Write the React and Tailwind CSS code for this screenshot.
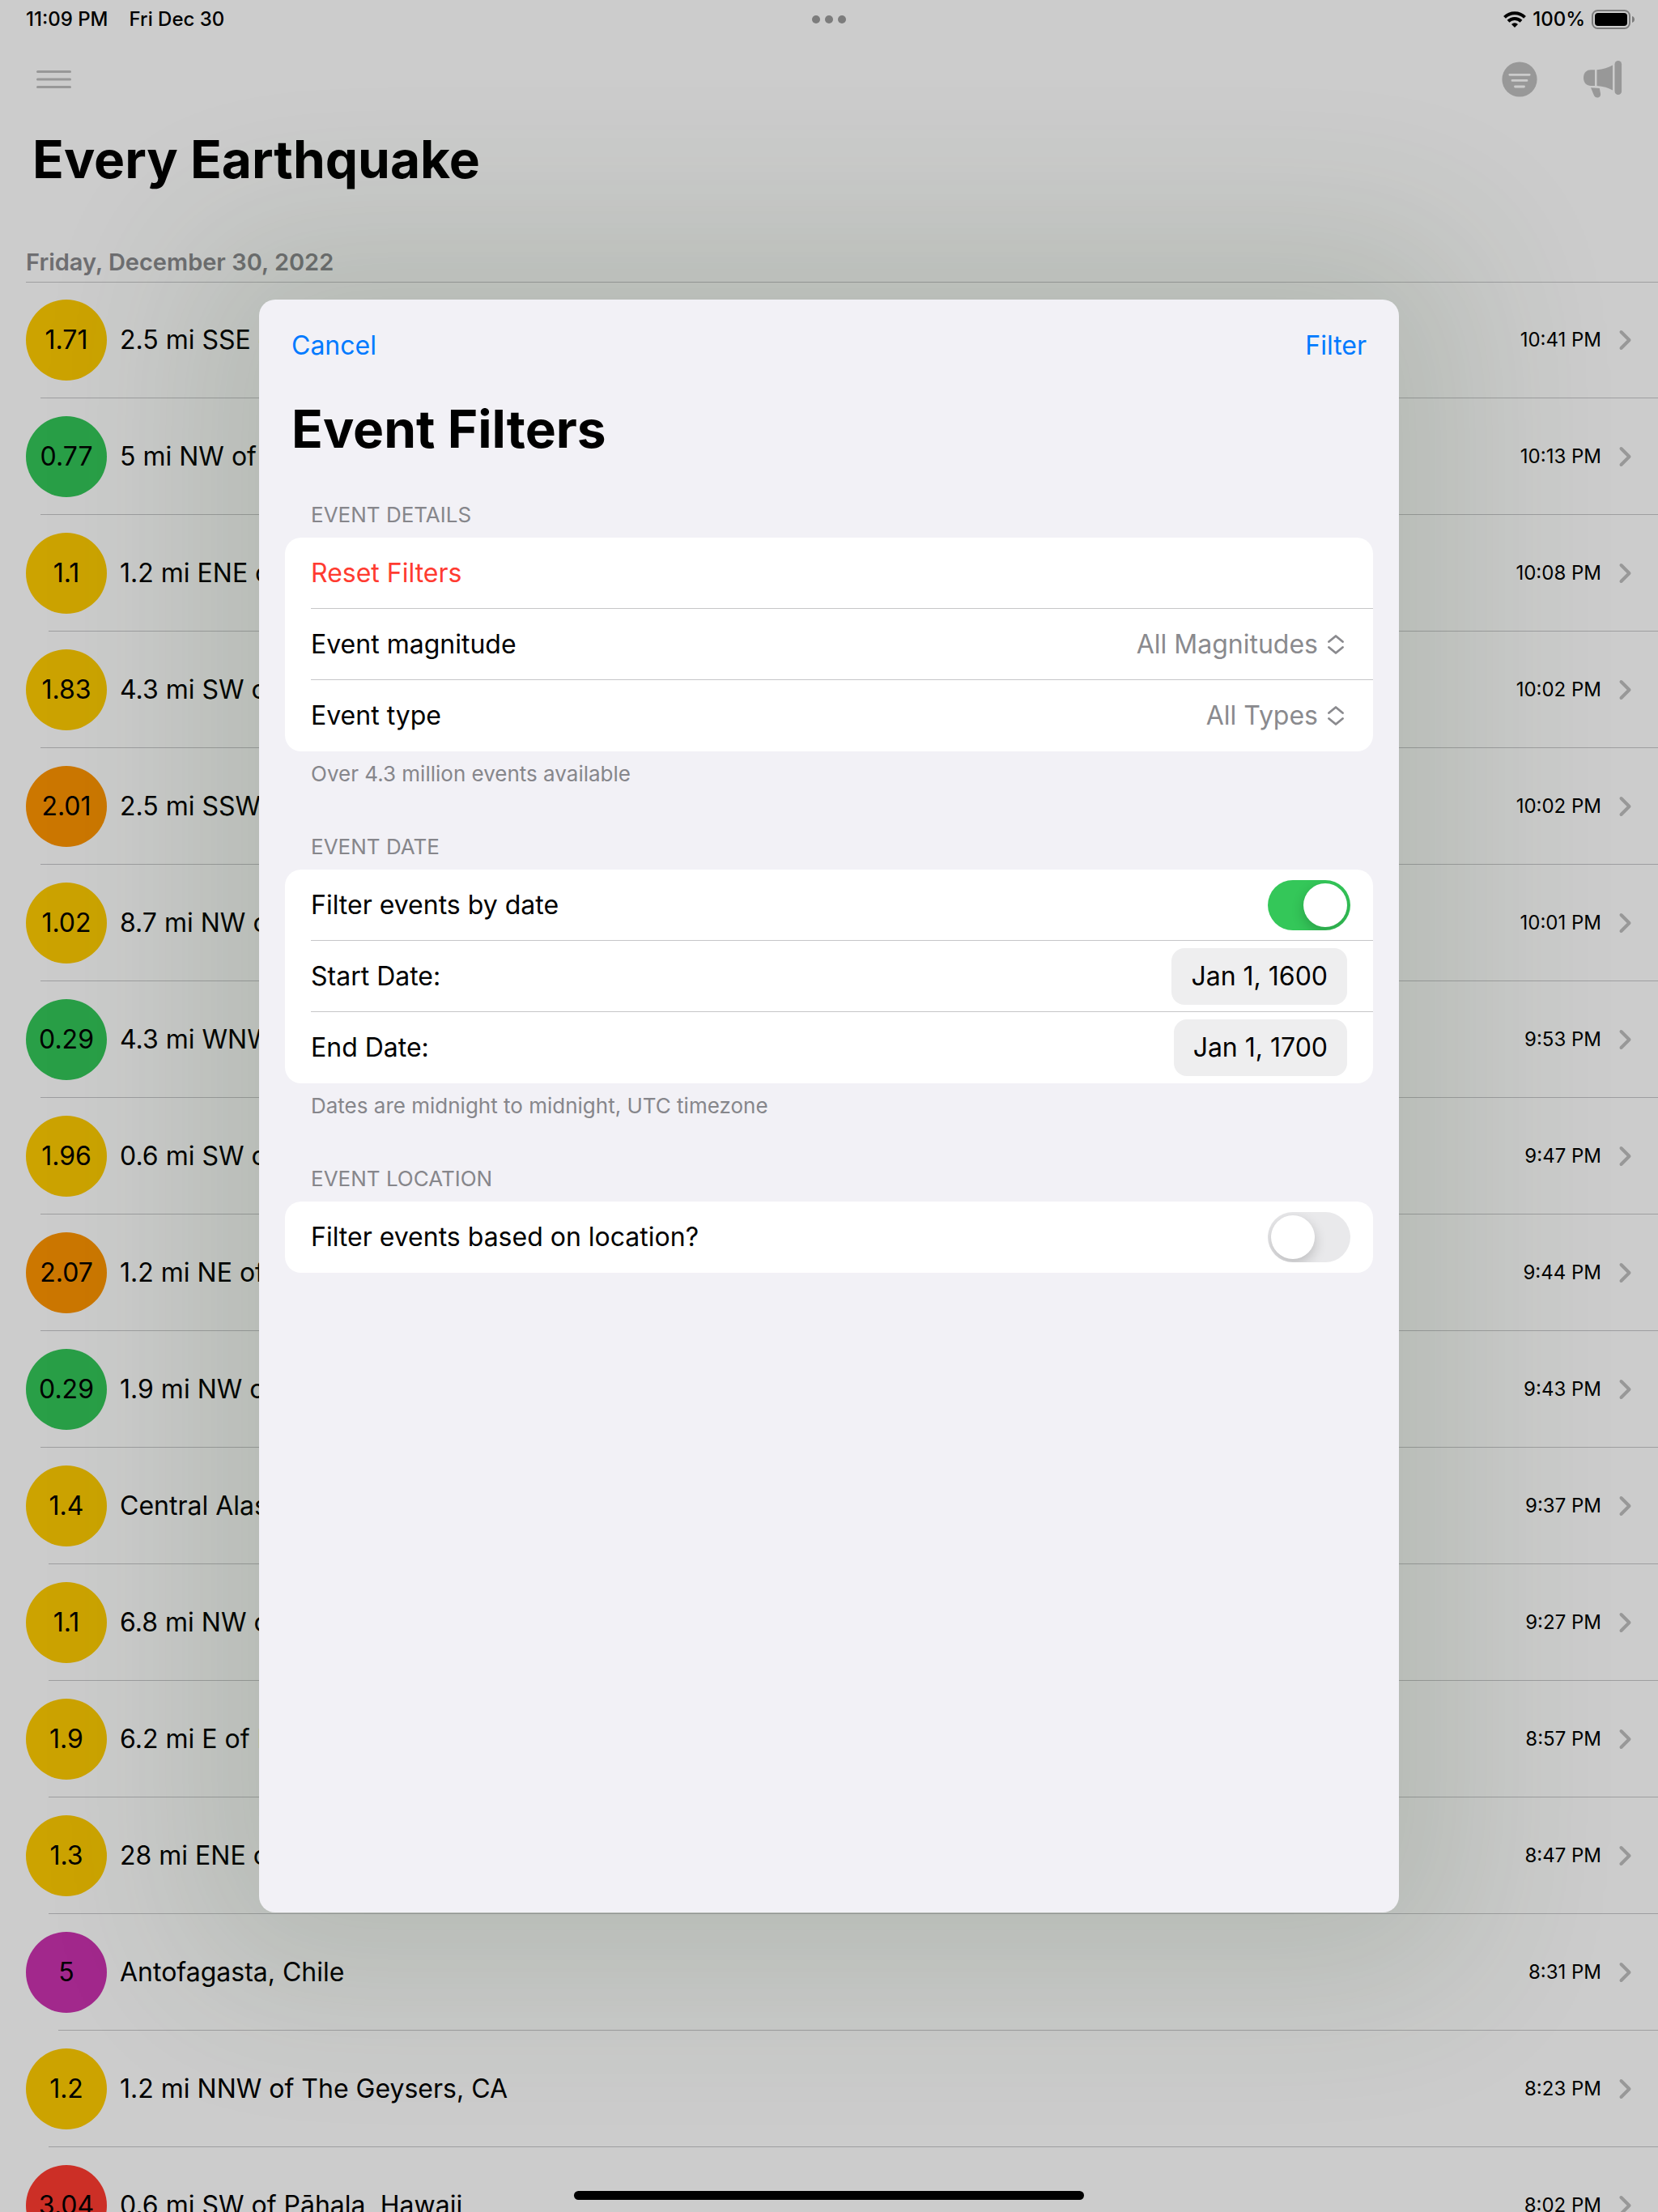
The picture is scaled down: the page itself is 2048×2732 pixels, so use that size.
const QUAKES = [
  ["1.71", "2.5 mi SSE of Mammoth Lakes, CA", "10:41 PM", "yellow"],
  ["0.77", "5 mi NW of The Geysers, CA", "10:13 PM", "green"],
  ["1.1", "1.2 mi ENE of Pleasant Hill, CA", "10:08 PM", "yellow"],
  ["1.83", "4.3 mi SW of Volcano, Hawaii", "10:02 PM", "yellow"],
  ["2.01", "2.5 mi SSW of Pāhala, Hawaii", "10:02 PM", "orange"],
  ["1.02", "8.7 mi NW of Ludlow, CA", "10:01 PM", "yellow"],
  ["0.29", "4.3 mi WNW of Cobb, CA", "9:53 PM", "green"],
  ["1.96", "0.6 mi SW of Pāhala, Hawaii", "9:47 PM", "yellow"],
  ["2.07", "1.2 mi NE of Pāhala, Hawaii", "9:44 PM", "orange"],
  ["0.29", "1.9 mi NW of The Geysers, CA", "9:43 PM", "green"],
  ["1.4", "Central Alaska", "9:37 PM", "yellow"],
  ["1.1", "6.8 mi NW of The Geysers, CA", "9:27 PM", "yellow"],
  ["1.9", "6.2 mi E of Pāhala, Hawaii", "8:57 PM", "yellow"],
  ["1.3", "28 mi ENE of Pedro Bay, Alaska", "8:47 PM", "yellow"],
  ["5", "Antofagasta, Chile", "8:31 PM", "magenta"],
  ["1.2", "1.2 mi NNW of The Geysers, CA", "8:23 PM", "yellow"],
  ["3.04", "0.6 mi SW of Pāhala, Hawaii", "8:02 PM", "red"],
];

const BADGE = {
  yellow: "bg-[#ffcc00]",
  green: "bg-[#34c759]",
  orange: "bg-[#ff9500]",
  red: "bg-[#ff3b30]",
  magenta: "bg-[#cb32af]",
};

// Each divider starts where the magnitude text of its row starts.
const DIVIDER = {
  1: "ml-[72px]",
  3: "ml-[60px]",
  4: "ml-[50px]",
};

function StatusBar() {
  return (
    <div className="relative flex h-12 items-center justify-between pl-8 pr-7 text-2xl font-medium">
      <div className="flex gap-[26px]">
        <span>11:09 PM</span>
        <span>Fri Dec 30</span>
      </div>
      <svg className="absolute inset-x-0 mx-auto" width="44" height="12" viewBox="0 0 44 12" fill="#9c9c9c">
        <circle cx="6" cy="6" r="5" />
        <circle cx="22" cy="6" r="5" />
        <circle cx="38" cy="6" r="5" />
      </svg>
      <div className="flex items-center gap-2">
        <svg width="28" height="20" viewBox="0 0 28 20" fill="none" stroke="#000" strokeWidth="4">
          <path d="M1.500 7.400a17.700 17.700 0 0 1 25 0" />
          <path d="M6 12.300a11.500 11.500 0 0 1 16 0" />
          <path d="M14 20l-4-4.100a5.800 5.800 0 0 1 8 0z" fill="#000" stroke="none" />
        </svg>
        <span>100%</span>
        <svg width="54" height="24" viewBox="0 0 54 24">
          <rect x="1" y="1" width="46" height="22" rx="6.500" fill="none" stroke="#9c9c9c" strokeWidth="2" />
          <rect x="4" y="4" width="40" height="16" rx="4" fill="#000" />
          <path d="M50 8c2 .6 3 2.200 3 4s-1 3.400-3 4z" fill="#9c9c9c" />
        </svg>
      </div>
    </div>
  );
}

function NavBar() {
  return (
    <div className="flex h-[100px] items-center justify-between px-11">
      <button aria-label="Menu">
        <svg width="44" height="24" viewBox="0 0 44 24" stroke="#bfbfbf" strokeWidth="3" strokeLinecap="round">
          <path d="M2.500 2.500h40M2.500 12h40M2.500 21.500h40" />
        </svg>
      </button>
      <div className="flex items-center gap-[57px]">
        <button aria-label="Filters">
          <svg width="44" height="44" viewBox="0 0 44 44">
            <circle cx="22" cy="22" r="21.600" fill="#bfbfbf" />
            <path d="M9.800 16.300h24.400M13 23.400h18M16.500 31h11" stroke="#fff" strokeWidth="2.800" strokeLinecap="round" />
          </svg>
        </button>
        <button aria-label="Announcements">
          <svg width="48" height="46" viewBox="0 0 48 46" fill="#bfbfbf">
            <rect x="38.500" y="0" width="8.600" height="42" rx="4.300" />
            <path d="M16.500 11.300C24 10.800 31 8.500 36 5.500v31C31 33.500 24 31.500 16.500 31z" />
            <path d="M14 11.200H9C4 11.200 0 14.500 0 21s4 10 9 10h5z" />
            <path d="M9 33.300l10.800.6 1.200 6.500c.6 3-1.400 5-4 5-2 0-3.400-1-4.200-3z" />
          </svg>
        </button>
      </div>
    </div>
  );
}

function QuakeRow({ quake }) {
  const [magnitude, place, time, tone] = quake;
  return (
    <li>
      <a href="#" className="flex h-[144px] items-center gap-4 px-8">
        <span className={`flex size-[100px] shrink-0 items-center justify-center rounded-full text-[32px] ${BADGE[tone]}`}>
          {magnitude}
        </span>
        <span className="grow truncate text-[32px]">{place}</span>
        <span className="text-2xl">{time}</span>
        <svg className="ml-1" width="18" height="28" viewBox="0 0 18 28" fill="none" stroke="#bfbfbf" strokeWidth="4" strokeLinecap="round" strokeLinejoin="round">
          <path d="M4.500 4l10 10-10 10" />
        </svg>
      </a>
      <div className={`-mt-px h-px bg-[#c6c6c8] ${DIVIDER[magnitude.length]}`} />
    </li>
  );
}

function Section({ title, footer, children }) {
  return (
    <section>
      <h3 className="px-8 text-[26px] leading-8 text-[#86868b] uppercase">{title}</h3>
      <div className="mt-3 overflow-hidden rounded-[20px] bg-white">{children}</div>
      {footer && <p className="mt-3 px-8 text-[26px] leading-8 text-[#86868b]">{footer}</p>}
    </section>
  );
}

function Row({ children, last }) {
  return (
    <div className={last ? "ml-8 flex h-[88px] items-center justify-between" : "ml-8 flex h-[88px] items-center justify-between shadow-[inset_0_-1px_0_#c6c6c8]"}>
      {children}
    </div>
  );
}

function Picker({ id, label, value, last }) {
  return (
    <Row last={last}>
      <label htmlFor={id}>{label}</label>
      <span className="flex items-center gap-3 pr-9 text-[#8a8a8e]">
        <select id={id} defaultValue={value} className="field-sizing-content appearance-none bg-transparent text-right">
          <option>{value}</option>
        </select>
        <svg width="20" height="24" viewBox="0 0 20 24" fill="none" stroke="#8a8a8e" strokeWidth="2.800" strokeLinecap="round" strokeLinejoin="round">
          <path d="M1.500 8.500L10 1.500l8.500 7M1.500 15.500L10 22.500l8.500-7" />
        </svg>
      </span>
    </Row>
  );
}

function Toggle({ id, label, checked, last }) {
  return (
    <Row last={last}>
      <label htmlFor={id}>{label}</label>
      <input
        id={id}
        type="checkbox"
        role="switch"
        defaultChecked={checked}
        className="mr-7 flex h-[62px] w-[102px] appearance-none items-center overflow-hidden rounded-full bg-[#e9e9eb] p-1 before:size-[54px] before:rounded-full before:bg-white before:shadow-[0_6px_16px_rgba(0,0,0,0.2)] checked:justify-end checked:bg-[#34c759]"
      />
    </Row>
  );
}

function DateRow({ id, label, value, last }) {
  return (
    <Row last={last}>
      <label htmlFor={id}>{label}</label>
      <button id={id} className="mr-8 h-[70px] rounded-2xl bg-[#eeeeef] px-6">{value}</button>
    </Row>
  );
}

function FilterSheet() {
  return (
    <div role="dialog" aria-labelledby="sheet-title" className="h-[72.9vh] w-[68.75%] overflow-hidden rounded-[20px] bg-[#f2f1f6] px-8 text-[32px] shadow-[0_0_200px_80px_rgba(46,79,38,0.14)]">
      <div className="flex h-[114px] items-center justify-between px-2 text-[#007aff]">
        <button>Cancel</button>
        <button>Filter</button>
      </div>
      <h2 id="sheet-title" className="px-2 pt-1.5 text-[64px] leading-[80px] font-bold">Event Filters</h2>
      <div className="mt-[50px] flex flex-col gap-[58px]">
        <Section title="Event details" footer="Over 4.3 million events available">
          <Row>
            <button className="text-[#ff3b30]">Reset Filters</button>
          </Row>
          <Picker id="magnitude" label="Event magnitude" value="All Magnitudes" />
          <Picker id="type" label="Event type" value="All Types" last />
        </Section>
        <Section title="Event date" footer="Dates are midnight to midnight, UTC timezone">
          <Toggle id="by-date" label="Filter events by date" checked />
          <DateRow id="start" label="Start Date:" value="Jan 1, 1600" />
          <DateRow id="end" label="End Date:" value="Jan 1, 1700" last />
        </Section>
        <Section title="Event location">
          <Toggle id="by-location" label="Filter events based on location?" last />
        </Section>
      </div>
    </div>
  );
}

export default function App() {
  return (
    <div className="relative h-screen overflow-hidden bg-white font-['Inter',sans-serif] text-black">
      <StatusBar />
      <NavBar />
      <main>
        <h1 className="px-10 text-[64px] leading-[98px] font-bold">Every Earthquake</h1>
        <h2 className="-mb-px ml-8 flex h-[103px] items-end border-b border-[#c6c6c8] pb-1.5 text-[29px] leading-9 font-semibold text-[#8a8a8e]">
          Friday, December 30, 2022
        </h2>
        <ul>
          {QUAKES.map((quake) => (
            <QuakeRow key={quake[2] + quake[1]} quake={quake} />
          ))}
        </ul>
      </main>
      <div className="absolute inset-0 flex items-center justify-center bg-black/20">
        <FilterSheet />
      </div>
      <div className="absolute inset-x-0 bottom-[15px] mx-auto h-[11px] w-[630px] max-w-full rounded-full bg-black" />
    </div>
  );
}
